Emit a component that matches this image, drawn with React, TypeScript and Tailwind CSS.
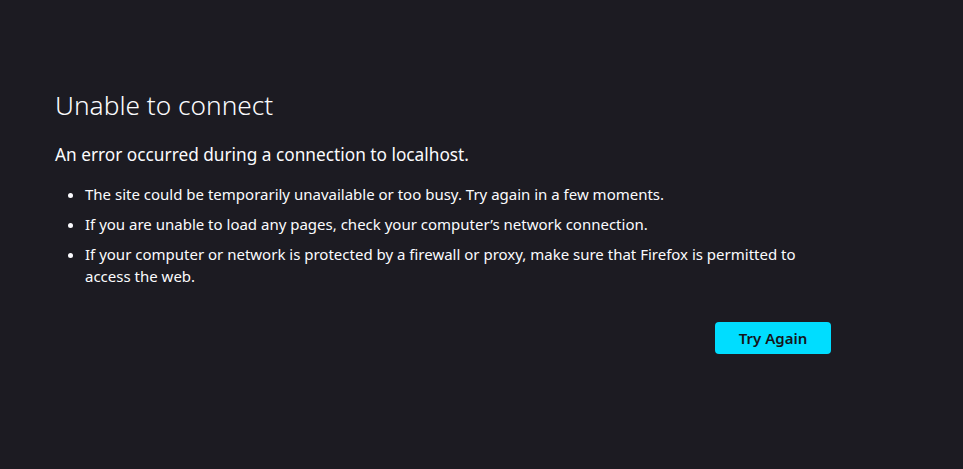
export default function App() {
  return (
    <div
      className="min-h-screen bg-[#1c1b22] text-[#fbfbfe]"
      style={{ fontFamily: '"Noto Sans", "Open Sans", sans-serif' }}
    >
      <div className="pl-[55px] pt-[87px] w-[831px]">
        <h1 className="text-[26.25px] leading-[36px] font-light">Unable to connect</h1>
        <p className="mt-[20px] text-[17.25px] leading-[24px]">
          An error occurred during a connection to localhost.
        </p>
        <ul className="mt-[16px] pl-[30px] list-disc text-[15px] leading-[22px] flex flex-col gap-[8px] pr-[20px]">
          <li>The site could be temporarily unavailable or too busy. Try again in a few moments.</li>
          <li>If you are unable to load any pages, check your computer’s network connection.</li>
          <li>
            If your computer or network is protected by a firewall or proxy, make sure that Firefox is permitted to
            access the web.
          </li>
        </ul>
        <div className="flex justify-end mt-[35px]">
          <button className="w-[116px] h-[32px] rounded-[4px] bg-[#00ddff] text-[#15141a] text-[15px] font-semibold">
            Try Again
          </button>
        </div>
      </div>
    </div>
  );
}
